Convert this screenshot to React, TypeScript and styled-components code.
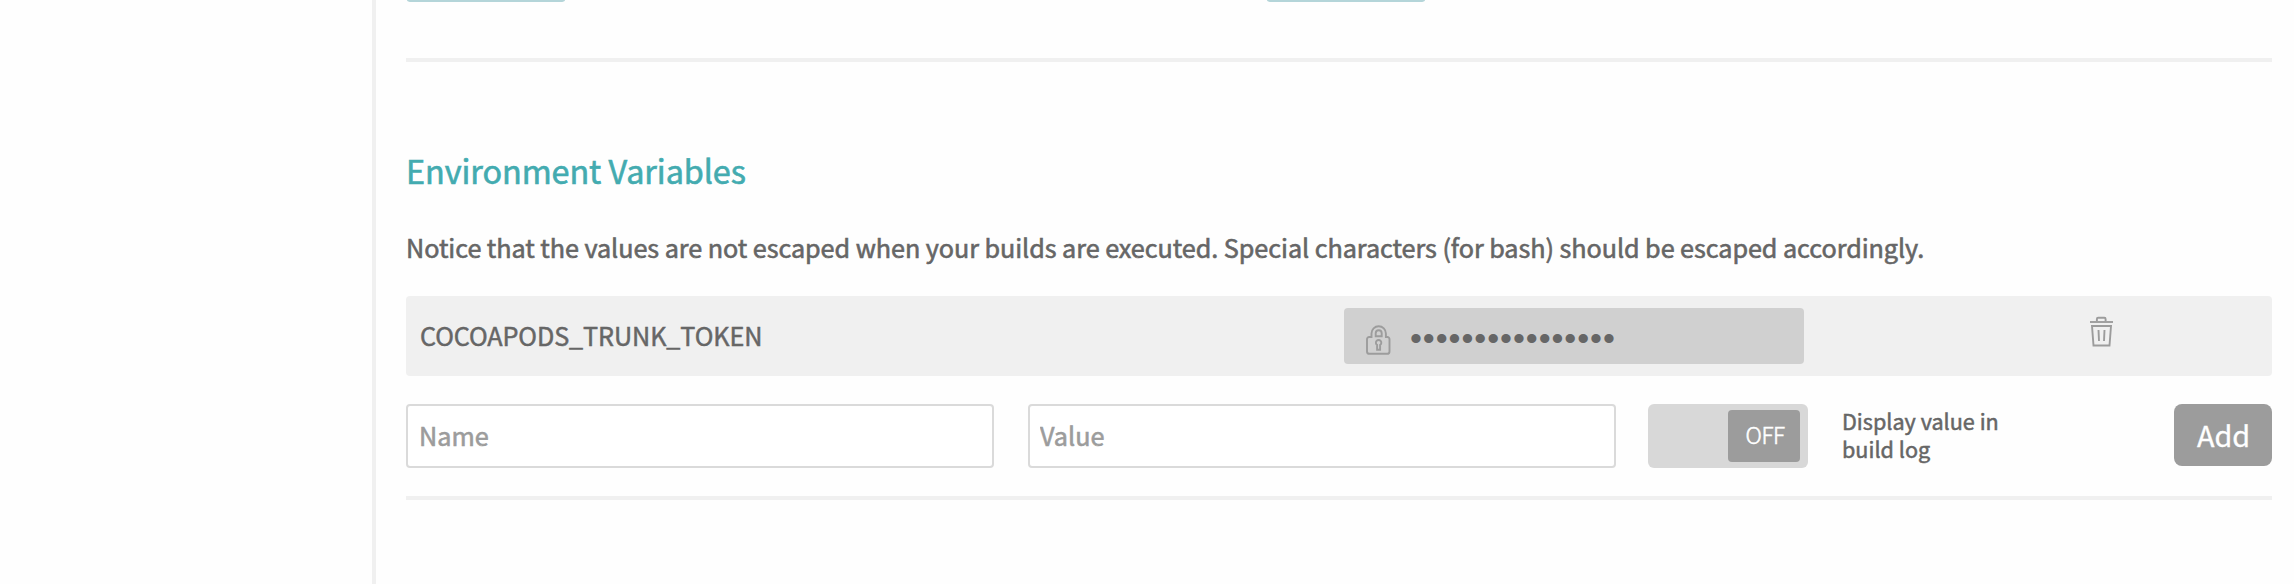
import React from 'react';
import styled, { createGlobalStyle } from 'styled-components';

const GlobalStyle = createGlobalStyle`
  *, *::before, *::after { box-sizing: border-box; }
  body {
    margin: 0;
    background: #fefefe;
    color: #666;
    font-family: "Noto Sans CJK SC", "Noto Sans", sans-serif;
    overflow: hidden;
  }
`;

const Page = styled.div`
  display: flex;
  height: 584px;
`;

const Sidebar = styled.aside`
  width: 376px;
  flex: none;
  border-right: 4px solid #f0f0f0;
`;

const Content = styled.main`
  width: 1866px;
  margin-left: 30px;
`;

const Tabs = styled.div`
  display: flex;
  gap: 702px;
  height: 58px;
  padding-left: 1px;
`;

const TabEnd = styled.span`
  width: 158px;
  height: 2px;
  background: #b4d5d9;
  border-radius: 0 0 5px 5px / 0 0 2px 2px;
`;

const Divider = styled.hr`
  height: 4px;
  margin: 0;
  border: 0;
  background: #f0f0f0;
`;

const Title = styled.h2`
  margin: 84px 0 0;
  font-size: 32.4px;
  line-height: 48px;
  font-weight: 400;
  letter-spacing: -0.08px;
  color: #43abb0;
  -webkit-text-stroke: 0.6px currentColor;
`;

const Notice = styled.p`
  margin: 35px 0 0;
  font-size: 25.2px;
  line-height: 36px;
  letter-spacing: -0.056px;
  white-space: nowrap;
  -webkit-text-stroke: 0.6px currentColor;
`;

const VariableRow = styled.div`
  display: flex;
  height: 80px;
  margin-top: 31px;
  padding: 12px 158px 12px 14px;
  background: #f0f0f0;
  border-radius: 4px;
`;

const VariableName = styled.span`
  width: 924px;
  font-size: 25.2px;
  line-height: 54px;
  letter-spacing: -0.09px;
  -webkit-text-stroke: 0.5px currentColor;
`;

const SecretValue = styled.div`
  display: flex;
  width: 460px;
  height: 56px;
  padding: 16px 0 0 21px;
  background: #d0d0d0;
  border-radius: 4px;
`;

const Mask = styled.span`
  margin-left: 19px;
  font-family: "Liberation Sans", Arial, sans-serif;
  font-size: 34px;
  line-height: 28px;
  letter-spacing: 0.96px;
`;

const DeleteButton = styled.button`
  display: flex;
  width: 26px;
  height: 32px;
  margin: 8px 0 0 auto;
  padding: 0;
  border: 0;
  background: none;
`;

const Form = styled.div`
  display: flex;
  height: 64px;
  margin: 28px 0;
`;

const Field = styled.input<{ $gap: number }>`
  width: 588px;
  height: 64px;
  margin-right: ${(p) => p.$gap}px;
  padding: 0 12px 2px ${(p) => (p.$gap > 32 ? 11 : 10)}px;
  border: 2px solid #dadada;
  border-radius: 4px;
  outline: 0;
  background: #fff;
  font: 400 25.2px "Noto Sans CJK SC", sans-serif;
  &::placeholder {
    color: #9c9c9c;
    opacity: 1;
    -webkit-text-stroke: 0.6px currentColor;
  }
`;

const Toggle = styled.div`
  display: flex;
  justify-content: flex-end;
  width: 160px;
  height: 64px;
  padding: 6px 8px;
  background: #d8d8d8;
  border-radius: 6px;
`;

const Knob = styled.span`
  width: 72px;
  height: 52px;
  padding-left: 2px;
  background: #9c9c9c;
  border-radius: 4px;
  color: #fff;
  font-size: 22.5px;
  font-weight: 300;
  line-height: 49px;
  letter-spacing: -0.4px;
  text-align: center;
  -webkit-text-stroke: 0.5px currentColor;
`;

const ToggleLabel = styled.span`
  width: 190px;
  margin: 3px 0 0 34px;
  font-size: 21.6px;
  line-height: 28px;
  -webkit-text-stroke: 0.5px currentColor;
`;

const AddButton = styled.button`
  width: 98px;
  height: 62px;
  margin-left: auto;
  padding: 0 0 2px 1px;
  border: 0;
  border-radius: 8px;
  background: #9c9c9c;
  color: #fff;
  font: 400 28.8px "Noto Sans CJK SC", sans-serif;
  -webkit-text-stroke: 0.3px currentColor;
`;

const LockIcon = () => (
  <svg width="26" height="32" viewBox="0 0 26 32" fill="none" stroke="#9c9c9c" strokeWidth="1.9">
    <path d="M6.500 13V9.500a7.200 7.200 0 0 1 14.400 0V13h1.400a2.200 2.200 0 0 1 2.200 2.200v12.200a2.400 2.400 0 0 1-2.400 2.400H4.400a2.400 2.400 0 0 1-2.400-2.400V15.200a2.200 2.200 0 0 1 2.200-2.200z" />
    <path d="M10.700 12.300V9.200a3 3 0 0 1 6 0v3.100z" />
    <path d="M12.100 20.900a2.700 2.700 0 1 1 3 0v4.900h-3z" />
  </svg>
);

const TrashIcon = () => (
  <svg width="26" height="32" viewBox="0 0 26 32" fill="none" stroke="#9c9c9c" strokeWidth="1.9">
    <path d="M2 6h23" />
    <path d="M8.900 5V3a1.200 1.200 0 0 1 1.200-1.200h6.300a1.200 1.200 0 0 1 1.200 1.200V5" />
    <path d="M4 10h19l-1.500 19.500H5.500z" />
    <path d="M10.500 14l.5 11M16.500 14l-.5 11" />
  </svg>
);

export default function App() {
  return (
    <Page>
      <GlobalStyle />
      <Sidebar />
      <Content>
        <Tabs>
          <TabEnd />
          <TabEnd />
        </Tabs>
        <Divider />
        <Title>Environment Variables</Title>
        <Notice>
          Notice that the values are not escaped when your builds are executed. Special characters (for bash) should be
          escaped accordingly.
        </Notice>
        <VariableRow>
          <VariableName>COCOAPODS_TRUNK_TOKEN</VariableName>
          <SecretValue>
            <LockIcon />
            <Mask>••••••••••••••••</Mask>
          </SecretValue>
          <DeleteButton aria-label="Delete">
            <TrashIcon />
          </DeleteButton>
        </VariableRow>
        <Form>
          <Field $gap={34} placeholder="Name" />
          <Field $gap={32} placeholder="Value" />
          <Toggle>
            <Knob>OFF</Knob>
          </Toggle>
          <ToggleLabel>Display value in build log</ToggleLabel>
          <AddButton>Add</AddButton>
        </Form>
        <Divider />
      </Content>
    </Page>
  );
}
